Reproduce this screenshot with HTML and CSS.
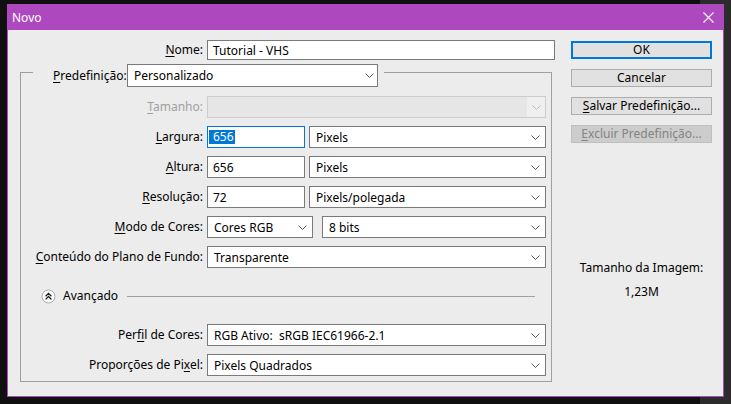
FILE: index.html
```html
<!DOCTYPE html>
<html lang="pt">
<head>
<meta charset="utf-8">
<title>Novo</title>
<link rel="stylesheet" href="styles.css">
</head>
<body>
<div class="desktop">
  <div class="window">
    <div class="titlebar">
      <span class="title">Novo</span>
      <svg class="close" width="11" height="11" viewBox="0 0 11 11"><path d="M0.5 0.5 10.5 10.5 M10.5 0.5 0.5 10.5" stroke="#fff" stroke-width="1.1" fill="none"/></svg>
    </div>
    <div class="client">
      <div class="main">
        <div class="name-row">
          <span class="lbl name-lbl"><u>N</u>ome:</span>
          <div class="edit name-edit">Tutorial - VHS</div>
        </div>
        <div class="group">
          <div class="legend">
            <span class="legend-lbl"><u>P</u>redefinição:</span>
            <div class="select preset"><span>Personalizado</span><svg class="chev" width="9" height="5" viewBox="0 0 9 5"><path d="M0.5 0.5 4.5 4.5 8.5 0.5" fill="none" stroke="#5a5a5a"/></svg></div>
          </div>
          <div class="rows">
            <div class="row">
              <span class="lbl disabled"><u>T</u>amanho:</span>
              <div class="select full off"><span></span><div class="arrow-zone"><svg class="chev" width="9" height="5" viewBox="0 0 9 5"><path d="M0.5 0.5 4.5 4.5 8.5 0.5" fill="none" stroke="#bdbdbd"/></svg></div></div>
            </div>
            <div class="row">
              <span class="lbl"><u>L</u>argura:</span>
              <div class="edit num focus"><span class="sel">656</span></div>
              <div class="select unit"><span>Pixels</span><svg class="chev" width="9" height="5" viewBox="0 0 9 5"><path d="M0.5 0.5 4.5 4.5 8.5 0.5" fill="none" stroke="#5a5a5a"/></svg></div>
            </div>
            <div class="row">
              <span class="lbl"><u>A</u>ltura:</span>
              <div class="edit num">656</div>
              <div class="select unit"><span>Pixels</span><svg class="chev" width="9" height="5" viewBox="0 0 9 5"><path d="M0.5 0.5 4.5 4.5 8.5 0.5" fill="none" stroke="#5a5a5a"/></svg></div>
            </div>
            <div class="row">
              <span class="lbl"><u>R</u>esolução:</span>
              <div class="edit num">72</div>
              <div class="select unit"><span>Pixels/polegada</span><svg class="chev" width="9" height="5" viewBox="0 0 9 5"><path d="M0.5 0.5 4.5 4.5 8.5 0.5" fill="none" stroke="#5a5a5a"/></svg></div>
            </div>
            <div class="row">
              <span class="lbl"><u>M</u>odo de Cores:</span>
              <div class="select mode"><span>Cores RGB</span><svg class="chev" width="9" height="5" viewBox="0 0 9 5"><path d="M0.5 0.5 4.5 4.5 8.5 0.5" fill="none" stroke="#5a5a5a"/></svg></div>
              <div class="select bits"><span>8 bits</span><svg class="chev" width="9" height="5" viewBox="0 0 9 5"><path d="M0.5 0.5 4.5 4.5 8.5 0.5" fill="none" stroke="#5a5a5a"/></svg></div>
            </div>
            <div class="row">
              <span class="lbl"><u>C</u>onteúdo do Plano de Fundo:</span>
              <div class="select full"><span>Transparente</span><svg class="chev" width="9" height="5" viewBox="0 0 9 5"><path d="M0.5 0.5 4.5 4.5 8.5 0.5" fill="none" stroke="#5a5a5a"/></svg></div>
            </div>
          </div>
          <div class="adv">
            <svg class="adv-icon" width="15" height="15" viewBox="0 0 15 15"><circle cx="7.5" cy="7.5" r="6.5" fill="#fbfbfb" stroke="#ababab"/><path d="M4.6 7.2 7.5 4.3 10.4 7.2 M4.6 10.4 7.5 7.5 10.4 10.4" fill="none" stroke="#1e1e1e" stroke-width="1.3"/></svg>
            <span class="adv-text">Avançado</span>
            <div class="adv-line"></div>
          </div>
          <div class="rows">
            <div class="row">
              <span class="lbl">Per<u>f</u>il de Cores:</span>
              <div class="select full"><span>RGB Ativo:&nbsp; sRGB IEC61966-2.1</span><svg class="chev" width="9" height="5" viewBox="0 0 9 5"><path d="M0.5 0.5 4.5 4.5 8.5 0.5" fill="none" stroke="#5a5a5a"/></svg></div>
            </div>
            <div class="row">
              <span class="lbl">Proporções de Pi<u>x</u>el:</span>
              <div class="select full"><span>Pixels Quadrados</span><svg class="chev" width="9" height="5" viewBox="0 0 9 5"><path d="M0.5 0.5 4.5 4.5 8.5 0.5" fill="none" stroke="#5a5a5a"/></svg></div>
            </div>
          </div>
        </div>
      </div>
      <div class="side">
        <div class="btn default">OK</div>
        <div class="btn">Cancelar</div>
        <div class="btn"><span><u>S</u>alvar Predefinição...</span></div>
        <div class="btn off"><span><u>E</u>xcluir Predefinição...</span></div>
        <div class="info first">Tamanho da Imagem:</div>
        <div class="info">1,23M</div>
      </div>
    </div>
  </div>
</div>
</body>
</html>
```

FILE: styles.css
```css
* { box-sizing: border-box; }

html, body {
  margin: 0;
  padding: 0;
}

body {
  width: 731px;
  height: 404px;
  overflow: hidden;
  background: linear-gradient(to right, #101010 0, #101010 700px, #2b2b2b 700px);
  font-family: "Noto Sans", "Open Sans", sans-serif;
  font-size: 12px;
  color: #000;
}

u { text-decoration: underline; text-underline-offset: 2px; text-decoration-thickness: 1px; }

.desktop {
  padding: 4px 0 0 7px;
}

.window {
  width: 717px;
  height: 393px;
  border: 1px solid #ae48bf;
  background: #ececec;
  display: flex;
  flex-direction: column;
}

.titlebar {
  height: 25px;
  flex: none;
  background: #ae48bf;
  display: flex;
  align-items: center;
  justify-content: space-between;
  padding: 0 9px 0 4px;
  color: #fff;
}

.title { line-height: 16px; }

.client {
  flex: 1;
  display: flex;
  align-items: flex-start;
  gap: 16px;
  padding: 10px 0 0 12px;
}

.main { width: 535px; flex: none; }

.name-row {
  display: flex;
  align-items: center;
  gap: 4px;
  height: 20px;
}

.lbl {
  flex: none;
  width: 182px;
  text-align: right;
  white-space: nowrap;
  line-height: 16px;
}

.name-lbl { width: 183px; }

.lbl.disabled { color: #a0a0a0; }

.edit {
  flex: none;
  height: 22px;
  border: 1px solid #7a7a7a;
  background: #fff;
  display: flex;
  align-items: center;
  padding-left: 5px;
  white-space: nowrap;
}

.name-edit { width: 348px; height: 20px; }

.edit.num { width: 98px; }

.edit.focus { border-color: #0078d7; padding-left: 1px; }

.sel {
  background: #0078d7;
  color: #fff;
  padding: 0 1px 0 4px;
  line-height: 14px;
}

.group {
  margin-top: 12px;
  width: 532px;
  height: 310px;
  border: 1px solid #a0a0a0;
}

.legend {
  width: max-content;
  margin: -9px 0 0 12px;
  padding: 0 6px 0 20px;
  background: #ececec;
  display: flex;
  align-items: center;
  gap: 4px;
}

.legend-lbl {
  width: 70px;
  text-align: right;
  white-space: nowrap;
}

.select {
  flex: none;
  height: 22px;
  border: 1px solid #7a7a7a;
  background: #fff;
  display: flex;
  align-items: center;
  justify-content: space-between;
  padding: 0 5px 0 6px;
  white-space: nowrap;
}

.select.preset { width: 251px; height: 23px; padding-right: 3px; }
.select.full { width: 339px; }
.select.unit { width: 237px; }
.select.mode { width: 106px; }
.select.bits { width: 224px; margin-left: 5px; }

.select.off {
  border-color: #cccccc;
  background: #e6e6e6;
  padding: 0;
}

.arrow-zone {
  width: 18px;
  height: 100%;
  background: #efefef;
  display: flex;
  align-items: center;
  justify-content: center;
}

.chev { flex: none; }

.rows {
  display: flex;
  flex-direction: column;
  gap: 8px;
  margin-top: 9px;
}

.row {
  display: flex;
  align-items: center;
  gap: 4px;
  height: 22px;
}

.adv {
  display: flex;
  align-items: center;
  height: 16px;
  margin: 20px 16px 20px 20px;
}

.adv-icon { flex: none; }

.adv-text { margin-left: 7px; line-height: 16px; }

.adv-line {
  flex: 1;
  height: 1px;
  background: #a0a0a0;
  margin-left: 9px;
}

.adv + .rows { margin-top: 0; }

.side {
  width: 141px;
  flex: none;
  padding-top: 1px;
  display: flex;
  flex-direction: column;
  gap: 10px;
}

.btn {
  height: 18px;
  border: 1px solid #adadad;
  background: #e1e1e1;
  display: flex;
  align-items: center;
  justify-content: center;
  line-height: 16px;
  white-space: nowrap;
}

.btn.default { border: 2px solid #0078d7; }

.btn.off {
  background: #cccccc;
  border-color: #bfbfbf;
  color: #838383;
}

.info {
  text-align: center;
  line-height: 16px;
  margin-top: -2px;
}

.info.first { margin-top: 107px; }
```
